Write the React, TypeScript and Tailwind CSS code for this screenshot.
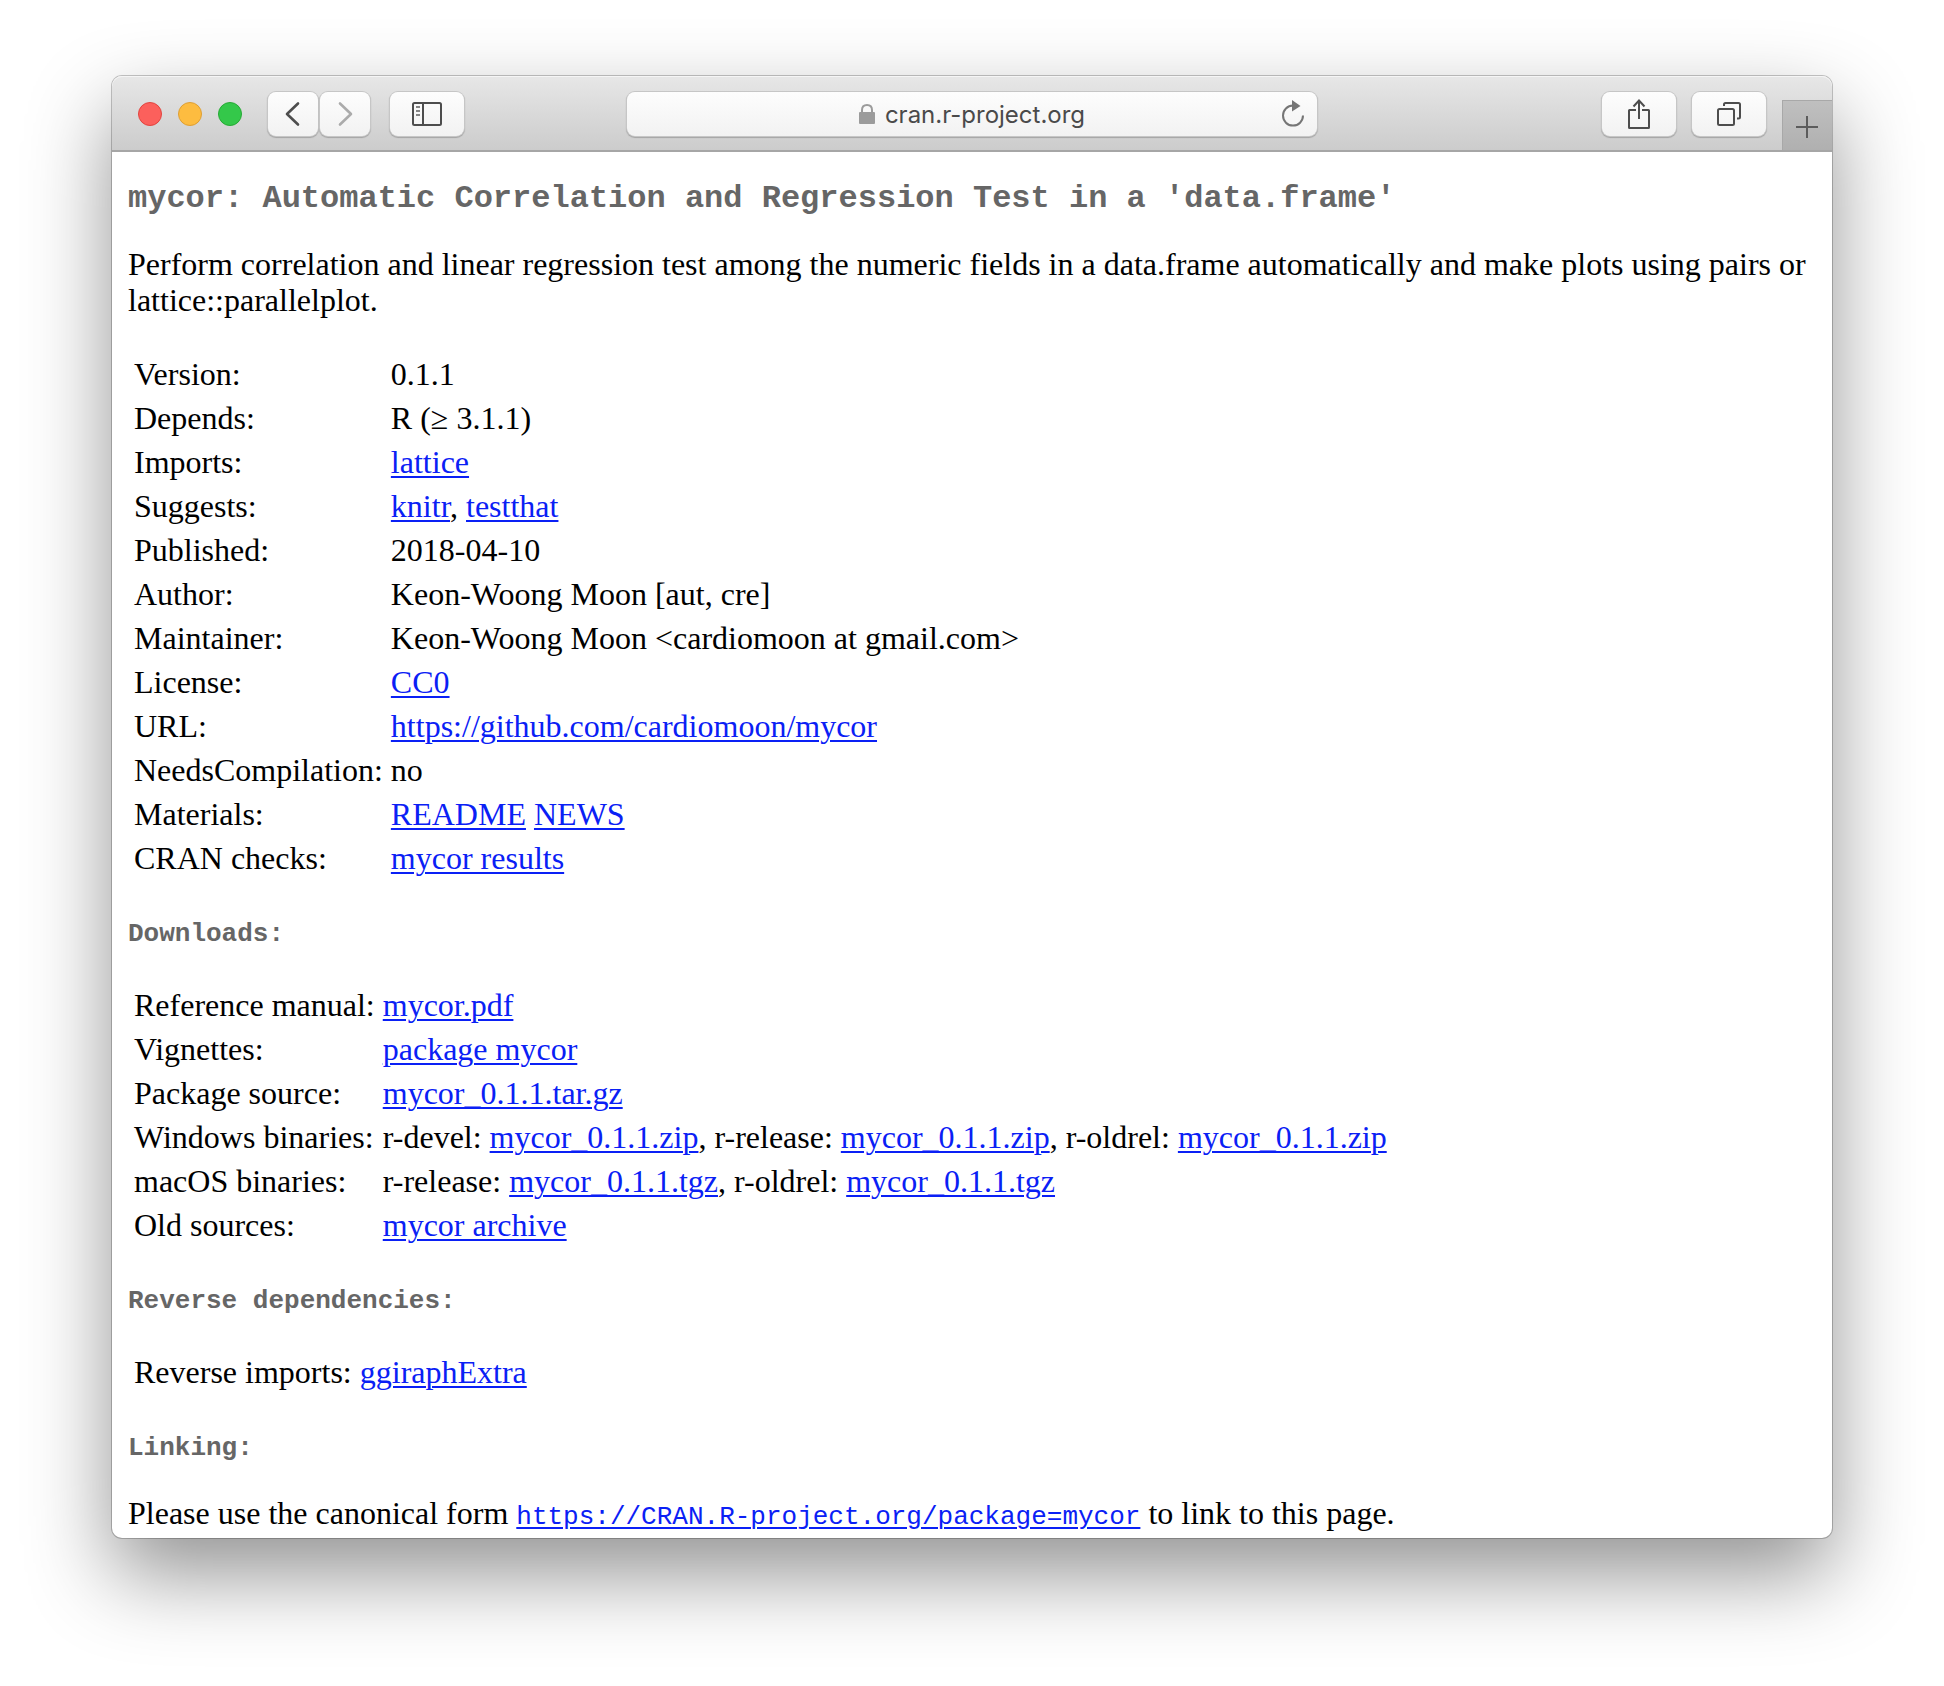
import type { ReactNode } from "react";

const serif = "font-['Liberation_Serif','Times_New_Roman',serif]";
const mono = "font-['Liberation_Mono','Courier_New',monospace]";

function Link({ children }: { children: ReactNode }) {
  return (
    <a href="#" className="text-[#0a20f5] underline decoration-2 underline-offset-3">
      {children}
    </a>
  );
}

function ToolButton({ label, wide, children }: { label: string; wide?: boolean; children: ReactNode }) {
  return (
    <button
      aria-label={label}
      className={
        (wide ? "w-[74px]" : "w-[50px]") +
        " flex h-11 shrink-0 items-center justify-center rounded-lg bg-linear-to-b from-[#fdfdfd] to-[#f2f2f2] shadow-[0_0_0_1px_#c6c6c6,0_1px_1px_1px_#a3a3a3]"
      }
    >
      {children}
    </button>
  );
}

function Heading({ children }: { children: ReactNode }) {
  return (
    <h4 className={`${mono} mt-[37px] mb-[31px] text-[26px] leading-[31px] font-bold text-[#666666]`}>{children}</h4>
  );
}

function InfoTable({ caption, rows }: { caption: string; rows: [string, ReactNode][] }) {
  return (
    <table aria-label={caption} className="border-separate border-spacing-1">
      <tbody>
        {rows.map(([name, value]) => (
          <tr key={name}>
            <td className="p-0.5 whitespace-nowrap">{name}</td>
            <td className="p-0.5">{value}</td>
          </tr>
        ))}
      </tbody>
    </table>
  );
}

const details: [string, ReactNode][] = [
  ["Version:", "0.1.1"],
  ["Depends:", "R (≥ 3.1.1)"],
  ["Imports:", <Link>lattice</Link>],
  ["Suggests:", <><Link>knitr</Link>, <Link>testthat</Link></>],
  ["Published:", "2018-04-10"],
  ["Author:", "Keon-Woong Moon [aut, cre]"],
  ["Maintainer:", "Keon-Woong Moon <cardiomoon at gmail.com>"],
  ["License:", <Link>CC0</Link>],
  ["URL:", <Link>https://github.com/cardiomoon/mycor</Link>],
  ["NeedsCompilation:", "no"],
  ["Materials:", <><Link>README</Link> <Link>NEWS</Link></>],
  ["CRAN checks:", <Link>mycor results</Link>],
];

const downloads: [string, ReactNode][] = [
  ["Reference manual:", <Link>mycor.pdf</Link>],
  ["Vignettes:", <Link>package mycor</Link>],
  ["Package source:", <Link>mycor_0.1.1.tar.gz</Link>],
  [
    "Windows binaries:",
    <>r-devel: <Link>mycor_0.1.1.zip</Link>, r-release: <Link>mycor_0.1.1.zip</Link>, r-oldrel: <Link>mycor_0.1.1.zip</Link></>,
  ],
  ["macOS binaries:", <>r-release: <Link>mycor_0.1.1.tgz</Link>, r-oldrel: <Link>mycor_0.1.1.tgz</Link></>],
  ["Old sources:", <Link>mycor archive</Link>],
];

const reverse: [string, ReactNode][] = [["Reverse imports:", <Link>ggiraphExtra</Link>]];

function Toolbar() {
  return (
    <header className="grid h-[76px] grid-cols-[1fr_minmax(0,690px)_1fr] items-center rounded-t-[10px] border-b-2 border-[#a6a6a6] bg-linear-to-b from-[#e7e7e7] to-[#cccccc] pt-0.5 shadow-[inset_0_1px_0_#f5f5f5]">
      <div className="flex items-center pl-[26px]">
        <div className="flex gap-4">
          <button aria-label="Close" className="size-6 rounded-full border border-[#e2443f] bg-[#fc605c]" />
          <button aria-label="Minimize" className="size-6 rounded-full border border-[#de9f34] bg-[#fdbc40]" />
          <button aria-label="Zoom" className="size-6 rounded-full border border-[#27aa35] bg-[#34c84a]" />
        </div>
        <div className="ml-[26px] flex gap-0.5">
          <ToolButton label="Back">
            <svg width="16" height="26" viewBox="0 0 16 26" fill="none" stroke="#4d4d4d" strokeWidth="2.6" strokeLinecap="round" strokeLinejoin="round">
              <path d="M13 2.5 L2 13 L13 23.5" />
            </svg>
          </ToolButton>
          <ToolButton label="Forward">
            <svg width="16" height="26" viewBox="0 0 16 26" fill="none" stroke="#ababab" strokeWidth="2.6" strokeLinecap="round" strokeLinejoin="round">
              <path d="M3 2.5 L14 13 L3 23.5" />
            </svg>
          </ToolButton>
        </div>
        <div className="ml-5 flex">
          <ToolButton label="Show sidebar" wide>
            <svg width="30" height="24" viewBox="0 0 30 24" fill="none" stroke="#4d4d4d" strokeWidth="2">
              <rect x="1" y="1" width="28" height="22" rx="1.5" />
              <path d="M11 1 V23" />
              <path d="M4 5 H8 M4 9 H8 M4 13 H8" stroke="#858585" />
            </svg>
          </ToolButton>
        </div>
      </div>

      <div className="grid h-11 grid-cols-[1fr_auto_1fr] items-center rounded-lg bg-linear-to-b from-[#fdfdfd] to-[#f2f2f2] px-3 shadow-[0_0_0_1px_#c6c6c6,0_1px_1px_1px_#a3a3a3]">
        <span />
        <label className="flex items-center gap-2.5">
          <svg width="16" height="20" viewBox="0 0 16 20" fill="none" role="img" aria-label="Secure connection">
            <rect x="0" y="8" width="16" height="12" rx="1" fill="#9b9b9b" />
            <path d="M3 9 V6 C3 2.8 5 1 8 1 C11 1 13 2.8 13 6 V9" stroke="#9b9b9b" strokeWidth="2" />
          </svg>
          <input
            type="text"
            aria-label="Address"
            defaultValue="cran.r-project.org"
            className="[field-sizing:content] bg-transparent pt-0.5 font-[Inter,sans-serif] text-[24px] leading-8 text-[#4a4a4a] outline-none"
          />
        </label>
        <button aria-label="Reload" className="justify-self-end">
          <svg width="24" height="28" viewBox="0 0 24 28" fill="none">
            <path d="M13 5.6 H12 A10 10 0 1 0 22 15.6" stroke="#757575" strokeWidth="2" />
            <path d="M11 0 L19.5 6 L11 11.5 Z" fill="#757575" />
          </svg>
        </button>
      </div>

      <div className="flex items-center justify-end gap-4 self-stretch">
        <ToolButton label="Share" wide>
          <svg width="24" height="32" viewBox="0 0 24 32" fill="none" stroke="#4d4d4d" strokeWidth="2">
            <path d="M9 12 H2.5 Q2 12 2 12.5 V29.5 Q2 30 2.5 30 H21.5 Q22 30 22 29.5 V12.5 Q22 12 21.5 12 H15" />
            <path d="M12 21 V2.5 M6.5 8.5 L12 2.5 L17.5 8.5" />
          </svg>
        </ToolButton>
        <ToolButton label="Show tabs" wide>
          <svg width="26" height="26" viewBox="0 0 26 26" fill="none" stroke="#4d4d4d" strokeWidth="2">
            <rect x="2" y="8" width="16" height="16" rx="1.5" />
            <path d="M8 5 V3.5 Q8 2 9.5 2 H22.5 Q24 2 24 3.5 V16 Q24 17.5 22.5 17.5 H21" />
          </svg>
        </ToolButton>
        <button
          aria-label="New tab"
          className="flex h-[50px] w-[50px] shrink-0 items-center justify-center self-end border-t border-l border-[#a8a8a8] bg-linear-to-b from-[#bfbfbf] to-[#b0b0b0] pt-0.5 pr-px"
        >
          <svg width="22" height="22" viewBox="0 0 22 22" stroke="#5c5c5c" strokeWidth="2">
            <path d="M11 0 V22 M0 11 H22" />
          </svg>
        </button>
      </div>
    </header>
  );
}

export default function App() {
  return (
    <div className="min-h-screen overflow-hidden bg-white px-28 pt-19 pb-37">
      <div className="rounded-[10px] bg-white shadow-[0_0_0_1px_rgba(0,0,0,0.22),0_36px_84px_rgba(0,0,0,0.43)]">
        <Toolbar />
        <main className={`${serif} px-4 pt-[29px] pb-[7px] text-[32px] leading-9 text-black`}>
          <h2 className={`${mono} mb-[29px] text-[32px] leading-9 font-bold text-[#666666]`}>
            mycor: Automatic Correlation and Regression Test in a &#39;data.frame&#39;
          </h2>
          <p className="mb-8">
            Perform correlation and linear regression test among the numeric fields in a data.frame automatically and
            make plots using pairs or lattice::parallelplot.
          </p>
          <InfoTable caption="Package details" rows={details} />
          <Heading>Downloads:</Heading>
          <InfoTable caption="Downloads" rows={downloads} />
          <Heading>Reverse dependencies:</Heading>
          <InfoTable caption="Reverse dependencies" rows={reverse} />
          <Heading>Linking:</Heading>
          <p>
            Please use the canonical form{" "}
            <a href="#" className={`${mono} text-[26px] leading-none text-[#0a20f5] underline decoration-2 underline-offset-3`}>
              https://CRAN.R-project.org/package=mycor
            </a>{" "}
            to link to this page.
          </p>
        </main>
      </div>
    </div>
  );
}
